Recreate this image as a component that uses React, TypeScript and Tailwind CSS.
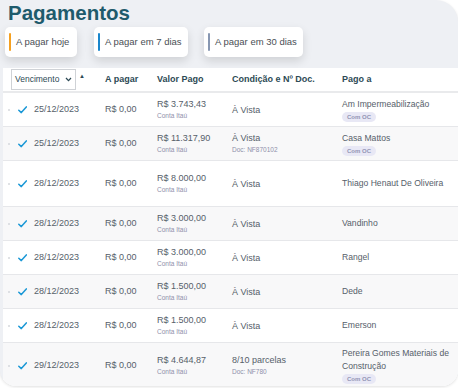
import React from 'react';

type Row = {
  date: string;
  valor: string;
  cond: string;
  doc?: string;
  nome: string;
  oc?: boolean;
  tall?: boolean;
};

const rows: Row[] = [
  { date: '25/12/2023', valor: 'R$ 3.743,43', cond: 'À Vista', nome: 'Am Impermeabilização', oc: true },
  { date: '25/12/2023', valor: 'R$ 11.317,90', cond: 'À Vista', doc: 'Doc: NF870102', nome: 'Casa Mattos', oc: true },
  { date: '28/12/2023', valor: 'R$ 8.000,00', cond: 'À Vista', nome: 'Thiago Henaut De Oliveira', tall: true },
  { date: '28/12/2023', valor: 'R$ 3.000,00', cond: 'À Vista', nome: 'Vandinho' },
  { date: '28/12/2023', valor: 'R$ 3.000,00', cond: 'À Vista', nome: 'Rangel' },
  { date: '28/12/2023', valor: 'R$ 1.500,00', cond: 'À Vista', nome: 'Dede' },
  { date: '28/12/2023', valor: 'R$ 1.500,00', cond: 'À Vista', nome: 'Emerson' },
  { date: '29/12/2023', valor: 'R$ 4.644,87', cond: '8/10 parcelas', doc: 'Doc: NF780', nome: 'Pereira Gomes Materiais de Construção', oc: true, tall: true },
];

const grid = 'grid grid-cols-[102px_52px_75px_110px_1fr] items-center';

function Check() {
  return (
    <svg width="9" height="8" viewBox="0 0 9 8" className="shrink-0">
      <path d="M0.8 4.2 L3.3 6.6 L8.3 0.9" fill="none" stroke="#1b98d6" strokeWidth="1.5" strokeLinecap="round" strokeLinejoin="round" />
    </svg>
  );
}

function Tab({ label, bar, w }: { label: string; bar: string; w: string }) {
  return (
    <div className={`flex items-center h-[30px] pl-[4px] bg-white rounded-[5px] shadow-[0_4px_10px_rgba(0,0,0,0.13)] ${w}`}>
      <div className={`w-[2px] h-[18px] rounded-full ${bar}`} />
      <span className="ml-[5px] text-[9.5px] text-[#4a4f55] whitespace-nowrap">{label}</span>
    </div>
  );
}

export default function App() {
  return (
    <div className="w-[458px] h-[388px] bg-white" style={{ fontFamily: '"Liberation Sans", Arial, sans-serif' }}>
      <div className="w-[458px] h-[386px] bg-[#eef0f4] rounded-tr-[22px] rounded-b-[16px] overflow-hidden flex flex-col shadow-[0_1px_3px_rgba(0,0,0,0.12)]">
        <div className="pl-[8px] pt-[1px] h-[25px] text-[20.5px] font-bold text-[#1e5b6c] leading-[24px]">Pagamentos</div>
        <div className="flex pl-[5px] mt-[2px]">
          <Tab label="A pagar hoje" bar="bg-[#f5a020]" w="w-[72px]" />
          <div className="w-[17px]" />
          <Tab label="A pagar em 7 dias" bar="bg-[#1a86cc]" w="w-[94px]" />
          <div className="w-[16px]" />
          <Tab label="A pagar em 30 dias" bar="bg-[#8797b2]" w="w-[99px]" />
        </div>
        <div className="ml-[3px] mt-[11px] flex-1 bg-white flex flex-col">
          <div className={`${grid} h-[25px] border-b-2 border-[#e9eaec] text-[9px] font-bold text-[#2d4a55]`}>
            <div className="flex items-center pl-[8px]">
              <div className="w-[65px] h-[21px] border border-[#cfd2d6] flex items-center justify-between px-[3px]">
                <span className="text-[8.5px] font-normal text-[#2d4a55]">Vencimento</span>
                <svg width="7" height="5" viewBox="0 0 7 5"><path d="M1 1 L3.5 3.6 L6 1" fill="none" stroke="#2d4a55" strokeWidth="1.3" /></svg>
              </div>
              <span className="ml-[3px] -mt-[6px] text-[6px]">▲</span>
            </div>
            <div>A pagar</div>
            <div>Valor Pago</div>
            <div>Condição e Nº Doc.</div>
            <div>Pago a</div>
          </div>
          {rows.map((r, i) => (
            <div
              key={i}
              className={`${grid} ${r.tall ? 'h-[46px]' : 'h-[34px]'} border-b border-[#e6e7ea] text-[9px] text-[#56606a] ${i % 2 === 1 ? 'bg-[#f8f8f9]' : 'bg-white'}`}
            >
              <div className="flex items-center pl-[5px]">
                <div className="w-[2px] h-[2px] rounded-full bg-[#d6d8dc]" />
                <div className="ml-[8px]"><Check /></div>
                <span className="ml-[7px]">{r.date}</span>
              </div>
              <div>R$ 0,00</div>
              <div className="flex flex-col">
                <span className="leading-[12px]">{r.valor}</span>
                <span className="text-[6.5px] text-[#8e90aa] leading-[10px] mt-[1px]">Conta Itaú</span>
              </div>
              <div className="flex flex-col">
                <span className="leading-[12px]">{r.cond}</span>
                {r.doc && <span className="text-[6.5px] text-[#8e90aa] leading-[10px] mt-[1px]">{r.doc}</span>}
              </div>
              <div className="flex flex-col items-start">
                <span className="leading-[13px] text-[8.6px] max-w-[110px]">{r.nome}</span>
                {r.oc && (
                  <span className="mt-[1px] h-[10px] px-[5px] rounded-full bg-[#e8e8f5] text-[6px] font-bold text-[#9294b4] leading-[10px]">Com OC</span>
                )}
              </div>
            </div>
          ))}
        </div>
      </div>
    </div>
  );
}
